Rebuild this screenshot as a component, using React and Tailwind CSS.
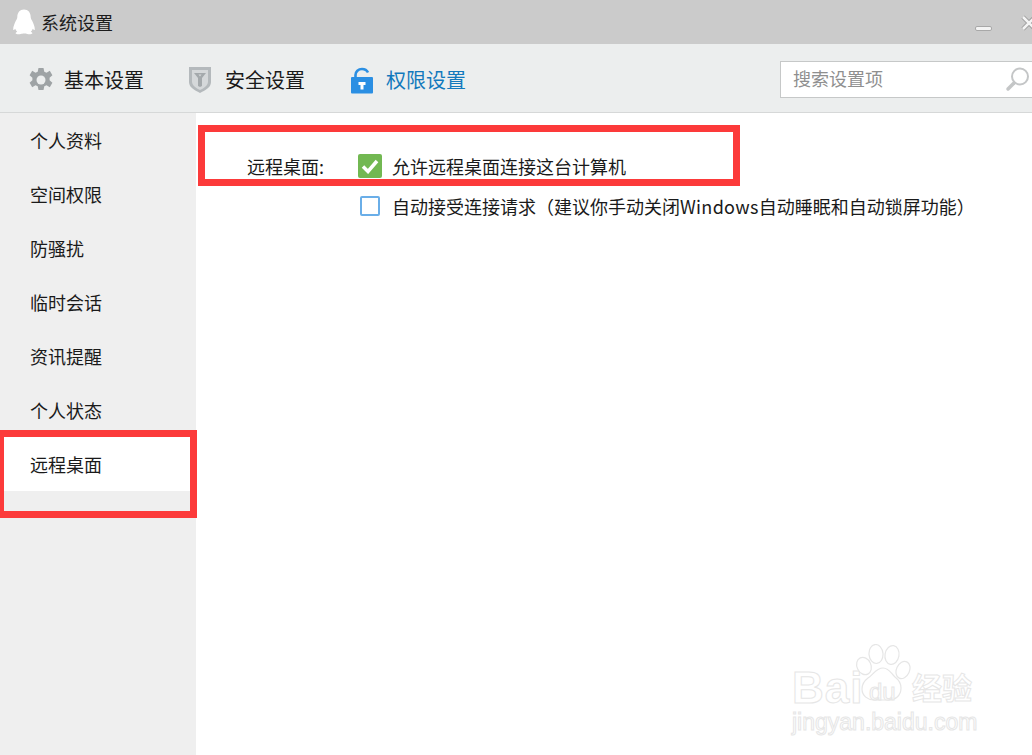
import React from "react";

const FONT = "font-['Noto_Sans_CJK_SC','Liberation_Sans',sans-serif]";
const menu = ["个人资料", "空间权限", "防骚扰", "临时会话", "资讯提醒", "个人状态", "远程桌面"];

const Penguin = () => (
  <svg width="24" height="26" viewBox="0 0 24 26" fill="#fff">
    <path d="M12 0.5c-4.200 0-6.600 3.200-6.700 7.400 0 1.300-.6 2.200-1.300 3.600C2.800 14 1 17.800 1.200 20.500c.1 1 .9.8 2-.7.5 1.300 1.200 2.300 2 3-1.300.6-1.800 1.200-1.500 1.800.4.700 3 .9 5 .5 1.200-.3 1.800-.5 3.300-.5s2.100.2 3.300.5c2 .4 4.600.2 5-.5.300-.6-.2-1.200-1.500-1.800.8-.7 1.500-1.700 2-3 1.100 1.500 1.900 1.700 2 .7.2-2.700-1.600-6.500-2.800-9-.7-1.400-1.300-2.300-1.300-3.600C18.600 3.700 16.200.5 12 .5z" />
  </svg>
);

const Gear = () => (
  <svg width="26" height="28" viewBox="0 0 26 28">
    <path
      fill="#9ea3a5"
      d="M10.500 1h5l.8 3.700 2.200 1 3.300-1.900 2.600 4.400-2.800 2.500v2.600l2.800 2.500-2.600 4.400-3.300-1.900-2.200 1-.8 3.700h-5l-.8-3.700-2.200-1-3.300 1.900-2.600-4.400 2.800-2.500v-2.600L1.600 8.200l2.600-4.400 3.300 1.900 2.200-1z"
      transform="translate(0 1)"
    />
    <circle cx="13" cy="14" r="4.500" fill="#eceeee" />
  </svg>
);

const Shield = () => (
  <svg width="24" height="28" viewBox="0 0 24 28">
    <path fill="#b4b9bc" d="M1 1h22v15c0 5-5 8-11 11C6 24 1 21 1 16z" />
    <path fill="#d5d8da" d="M4 4h16v11.500c0 4-4 6.500-8 8.500-4-2-8-4.500-8-8.500z" />
    <path fill="#a4a9ac" d="M6 7h12l-4 5v8l-2 1-2-1v-8z" />
    <path fill="#d5d8da" d="M10.500 8.500h3l-1.500 2z" />
  </svg>
);

const Lock = () => (
  <svg width="24" height="27" viewBox="0 0 24 27">
    <path fill="none" stroke="#2b8fe3" strokeWidth="2.600" d="M5.500 11V8c0-3.500 2.800-6 6.500-6 2.800 0 5 1.400 6 3.500" />
    <rect x="1" y="10" width="22" height="16.500" rx="1" fill="#2b8fe3" />
    <path fill="#fff" d="M8.500 15h7v3h-2v4.500h-3V18h-2z" />
  </svg>
);

const Search = () => (
  <svg width="26" height="26" viewBox="0 0 26 26" fill="none">
    <circle cx="15" cy="10.500" r="8" stroke="#c4c6c7" strokeWidth="2" />
    <path d="M9 17l-6 6" stroke="#c4c6c7" strokeWidth="3.500" strokeLinecap="round" />
  </svg>
);

const Paw = () => (
  <svg width="56" height="58" viewBox="0 0 56 58" fill="#fff" stroke="#e6e6e6" strokeWidth="1.200">
    <ellipse cx="9" cy="22" rx="7" ry="9" transform="rotate(-25 9 22)" />
    <ellipse cx="21" cy="10" rx="7" ry="9.500" transform="rotate(-5 21 10)" />
    <ellipse cx="37" cy="11" rx="7" ry="9.500" transform="rotate(10 37 11)" />
    <ellipse cx="48" cy="26" rx="6.500" ry="9" transform="rotate(25 48 26)" />
    <path d="M28 24c6 0 8 5 12 9 4 3 6 7 6 11 0 8-6 12-12 12H19c-6 0-12-4-12-11 0-4 2-8 6-11 5-3 8-10 15-10z" />
  </svg>
);

export default function App() {
  return (
    <div className={`relative w-[1032px] h-[755px] overflow-hidden bg-white text-[#1a1a1a] ${FONT}`}>
      {/* title bar */}
      <div className="h-[44px] bg-[#cbcbcb] flex items-center pl-[12px]">
        <Penguin />
        <span className="ml-[5px] text-[18px] leading-none text-[#1c1c1c]">系统设置</span>
        <div className="ml-auto self-start flex items-start mr-[-6px] pt-[14px]">
          <div className="w-[17px] h-[5px] rounded-[2px] bg-[#f4f4f4] border border-[#a8a8a8] mt-[12px]" />
          <svg className="ml-[28px]" width="18" height="18" viewBox="0 0 18 18">
            <path d="M3 3l12 12M15 3L3 15" stroke="#a0a0a0" strokeWidth="4.500" />
            <path d="M3 3l12 12M15 3L3 15" stroke="#f4f4f4" strokeWidth="2.500" />
          </svg>
        </div>
      </div>

      {/* toolbar */}
      <div className="h-[69px] bg-[#eceeee] border-b border-[#d6d8d8] flex items-center pl-[28px] pt-[4px]">
        <Gear />
        <span className="ml-[10px] text-[20px] leading-none">基本设置</span>
        <div className="ml-[44px]"><Shield /></div>
        <span className="ml-[13px] text-[20px] leading-none">安全设置</span>
        <div className="ml-[45px]"><Lock /></div>
        <span className="ml-[12px] text-[20px] leading-none text-[#1279bd]">权限设置</span>
        <div className="ml-auto mr-[-2px] mt-[-2px] w-[254px] h-[37px] bg-white border border-[#c6c8c8] flex items-center justify-between pl-[12px] pr-[2px]">
          <span className="mb-[2px] text-[18px] leading-none text-[#8f8f8f]">搜索设置项</span>
          <Search />
        </div>
      </div>

      {/* body */}
      <div className="flex h-[642px]">
        <div className="w-[196px] bg-[#efefef]">
          {menu.map((item) => (
            <div
              key={item}
              className={`h-[54px] flex items-center pl-[30px] text-[18px] leading-none ${item === "远程桌面" ? "bg-white" : ""}`}
            >
              <span className="mt-[-1px]">{item}</span>
            </div>
          ))}
        </div>
        <div className="flex-1 pl-[51px] pt-[40px] text-[18px] leading-none">
          <div className="flex items-center h-[26px]">
            <span className="w-[111px]">远程桌面:</span>
            <span className="w-[24px] h-[24px] mr-[10px] rounded-[2px] bg-[#72b852] flex items-center justify-center">
              <svg width="18" height="16" viewBox="0 0 18 16" fill="none">
                <path d="M2 8.500l5 5L16 3" stroke="#fff" strokeWidth="3.500" />
              </svg>
            </span>
            <span>允许远程桌面连接这台计算机</span>
          </div>
          <div className="flex items-center h-[26px] mt-[14px]">
            <span className="w-[113px]" />
            <span className="w-[20px] h-[20px] mr-[12px] rounded-[2px] bg-white border-2 border-[#6aaee8]" />
            <span>自动接受连接请求（建议你手动关闭<span className="tracking-[0.3px]">Windows</span>自动睡眠和自动锁屏功能）</span>
          </div>
        </div>
      </div>

      {/* red annotations drawn over the screenshot */}
      <div className="absolute left-[198px] top-[125px] w-[542px] h-[61px] border-[7px] border-[#fc3a3a]" />
      <div className="absolute left-[-3px] top-[430px] w-[200px] h-[88px] border-[7px] border-[#fc3a3a]" />

      {/* watermark */}
      <div className="absolute left-[792px] top-[644px] w-[190px] h-[92px]">
        <span className="absolute left-0 top-[22px] text-[44px] leading-none font-bold tracking-[1px] font-['Liberation_Sans'] text-white [-webkit-text-stroke:1px_#e6e6e6]">Bai</span>
        <div className="absolute left-[63px] top-0"><Paw /></div>
        <span className="absolute left-[77px] top-[36px] text-[24px] leading-none font-['Liberation_Sans'] text-white [-webkit-text-stroke:1px_#e6e6e6]">du</span>
        <span className="absolute left-[120px] top-[27px] text-[30px] leading-none font-bold text-white [-webkit-text-stroke:1px_#e6e6e6]">经验</span>
        <span className="absolute left-0 top-[67px] text-[23px] leading-none font-['Liberation_Sans'] text-white [-webkit-text-stroke:1px_#e6e6e6]">jingyan.baidu.com</span>
      </div>
    </div>
  );
}
